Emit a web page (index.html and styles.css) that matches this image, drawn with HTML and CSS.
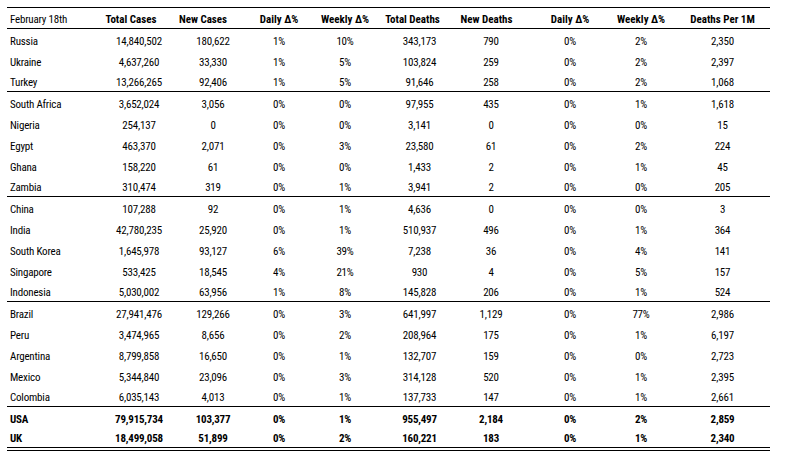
FILE: index.html
```html
<!DOCTYPE html>
<html>
<head>
<meta charset="utf-8">
<link rel="stylesheet" href="styles.css">
</head>
<body>
<table class="covid">
  <colgroup>
    <col class="c1"><col class="c2"><col class="c3"><col class="c4"><col class="c5">
    <col class="c6"><col class="c7"><col class="c8"><col class="c9"><col class="c10">
  </colgroup>
  <thead>
    <tr class="head">
      <th class="name date">February 18th</th>
      <th class="h-tc">Total Cases</th>
      <th class="h-nc">New Cases</th>
      <th>Daily Δ%</th>
      <th>Weekly Δ%</th>
      <th class="h-td">Total Deaths</th>
      <th class="h-nd">New Deaths</th>
      <th>Daily Δ%</th>
      <th>Weekly Δ%</th>
      <th class="last">Deaths Per 1M</th>
    </tr>
  </thead>
  <tbody>
    <tr><td class="name">Russia</td><td>14,840,502</td><td>180,622</td><td>1%</td><td>10%</td><td>343,173</td><td>790</td><td>0%</td><td>2%</td><td class="last">2,350</td></tr>
    <tr><td class="name">Ukraine</td><td>4,637,260</td><td>33,330</td><td>1%</td><td>5%</td><td>103,824</td><td>259</td><td>0%</td><td>2%</td><td class="last">2,397</td></tr>
    <tr class="sep"><td class="name">Turkey</td><td>13,266,265</td><td>92,406</td><td>1%</td><td>5%</td><td>91,646</td><td>258</td><td>0%</td><td>2%</td><td class="last">1,068</td></tr>
    <tr><td class="name">South Africa</td><td>3,652,024</td><td>3,056</td><td>0%</td><td>0%</td><td>97,955</td><td>435</td><td>0%</td><td>1%</td><td class="last">1,618</td></tr>
    <tr><td class="name">Nigeria</td><td>254,137</td><td>0</td><td>0%</td><td>0%</td><td>3,141</td><td>0</td><td>0%</td><td>0%</td><td class="last">15</td></tr>
    <tr><td class="name">Egypt</td><td>463,370</td><td>2,071</td><td>0%</td><td>3%</td><td>23,580</td><td>61</td><td>0%</td><td>2%</td><td class="last">224</td></tr>
    <tr><td class="name">Ghana</td><td>158,220</td><td>61</td><td>0%</td><td>0%</td><td>1,433</td><td>2</td><td>0%</td><td>1%</td><td class="last">45</td></tr>
    <tr class="sep"><td class="name">Zambia</td><td>310,474</td><td>319</td><td>0%</td><td>1%</td><td>3,941</td><td>2</td><td>0%</td><td>0%</td><td class="last">205</td></tr>
    <tr><td class="name">China</td><td>107,288</td><td>92</td><td>0%</td><td>1%</td><td>4,636</td><td>0</td><td>0%</td><td>0%</td><td class="last">3</td></tr>
    <tr><td class="name">India</td><td>42,780,235</td><td>25,920</td><td>0%</td><td>1%</td><td>510,937</td><td>496</td><td>0%</td><td>1%</td><td class="last">364</td></tr>
    <tr><td class="name">South Korea</td><td>1,645,978</td><td>93,127</td><td>6%</td><td>39%</td><td>7,238</td><td>36</td><td>0%</td><td>4%</td><td class="last">141</td></tr>
    <tr><td class="name">Singapore</td><td>533,425</td><td>18,545</td><td>4%</td><td>21%</td><td>930</td><td>4</td><td>0%</td><td>5%</td><td class="last">157</td></tr>
    <tr class="sep"><td class="name">Indonesia</td><td>5,030,002</td><td>63,956</td><td>1%</td><td>8%</td><td>145,828</td><td>206</td><td>0%</td><td>1%</td><td class="last">524</td></tr>
    <tr><td class="name">Brazil</td><td>27,941,476</td><td>129,266</td><td>0%</td><td>3%</td><td>641,997</td><td>1,129</td><td>0%</td><td>77%</td><td class="last">2,986</td></tr>
    <tr><td class="name">Peru</td><td>3,474,965</td><td>8,656</td><td>0%</td><td>2%</td><td>208,964</td><td>175</td><td>0%</td><td>1%</td><td class="last">6,197</td></tr>
    <tr><td class="name">Argentina</td><td>8,799,858</td><td>16,650</td><td>0%</td><td>1%</td><td>132,707</td><td>159</td><td>0%</td><td>0%</td><td class="last">2,723</td></tr>
    <tr><td class="name">Mexico</td><td>5,344,840</td><td>23,096</td><td>0%</td><td>3%</td><td>314,128</td><td>520</td><td>0%</td><td>1%</td><td class="last">2,395</td></tr>
    <tr class="sep"><td class="name">Colombia</td><td>6,035,143</td><td>4,013</td><td>0%</td><td>1%</td><td>137,733</td><td>147</td><td>0%</td><td>1%</td><td class="last">2,661</td></tr>
    <tr class="bold"><td class="name">USA</td><td>79,915,734</td><td>103,377</td><td>0%</td><td>1%</td><td>955,497</td><td>2,184</td><td>0%</td><td>2%</td><td class="last">2,859</td></tr>
    <tr class="bold end"><td class="name">UK</td><td>18,499,058</td><td>51,899</td><td>0%</td><td>2%</td><td>160,221</td><td>183</td><td>0%</td><td>1%</td><td class="last">2,340</td></tr>
  </tbody>
</table>
</body>
</html>
```

FILE: styles.css
```css
html, body {
  margin: 0;
  padding: 0;
  background: #fff;
}

body {
  padding: 7px 0 0 7px;
  font-family: "Roboto Condensed", "Roboto", "Liberation Sans", Arial, sans-serif;
  font-stretch: condensed;
  font-size: 11px;
  letter-spacing: -0.2px;
  color: #000;
}

.covid {
  border-collapse: collapse;
  table-layout: fixed;
  width: 763px;
  border-top: 1px solid #000;
}

.c1 { width: 93px; }
.c2 { width: 78px; }
.c3 { width: 70px; }
.c4 { width: 62px; }
.c5 { width: 70px; }
.c6 { width: 79px; }
.c7 { width: 64px; }
.c8 { width: 94px; }
.c9 { width: 48px; }
.c10 { width: 105px; }

.covid th,
.covid td {
  height: 21px;
  padding: 0 0 2px 0;
  box-sizing: border-box;
  line-height: 13px;
  vertical-align: bottom;
  text-align: center;
  white-space: nowrap;
}

.covid th {
  font-weight: bold;
  letter-spacing: 0;
}

.covid .name {
  text-align: left;
  padding-left: 3px;
}

.covid th.date {
  font-weight: normal;
  letter-spacing: -0.2px;
}

.covid .last {
  padding-left: 10px;
}

.covid th.h-tc { padding-right: 16px; }
.covid th.h-nc { padding-right: 20px; }
.covid th.h-td { padding-right: 14px; }
.covid th.h-nd { padding-right: 9px; }

.head th {
  border-bottom: 1px solid #000;
}

.sep td {
  border-bottom: 1px solid #000;
}

.bold td {
  font-weight: bold;
}

.end td {
  border-bottom: 4px double #000;
}
```
